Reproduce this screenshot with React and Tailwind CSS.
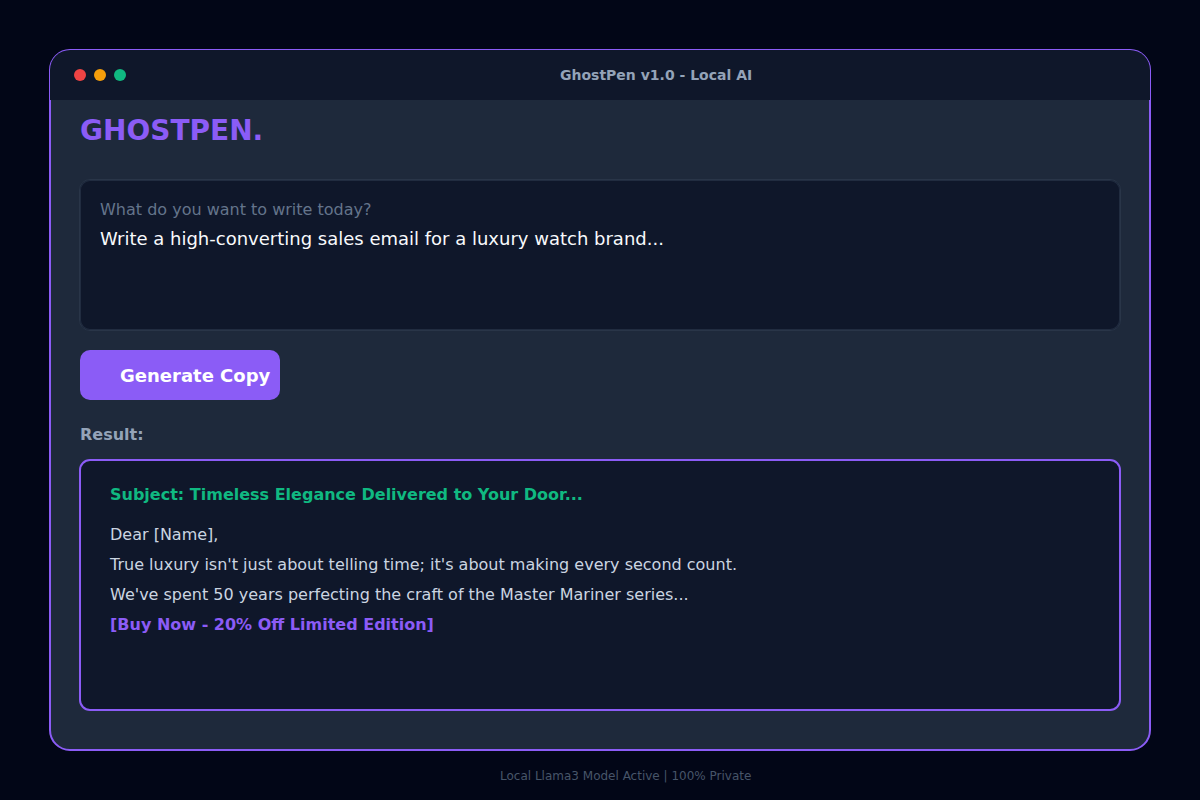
import { useState } from 'react';

const DOTS = ['bg-[#ef4444]', 'bg-[#f59e0b]', 'bg-[#10b981]'];

const RESULT = {
    subject: 'Subject: Timeless Elegance Delivered to Your Door...',
    body: [
        'Dear [Name],',
        "True luxury isn't just about telling time; it's about making every second count.",
        "We've spent 50 years perfecting the craft of the Master Mariner series...",
    ],
    cta: '[Buy Now - 20% Off Limited Edition]',
};

// Title bar sits over the inner half of the window border
const TitleBar = () => (
    <header className="-mx-px -mt-px h-[50px] grid grid-cols-[calc(50%-40px)_1fr] items-center rounded-t-[20px] bg-[#0f172a]">
        <div className="flex gap-2 pl-6">
            {DOTS.map((color) => (
                <span key={color} className={`size-3 rounded-full ${color}`} />
            ))}
        </div>
        <p className="text-sm font-bold text-[#94a3b8]">GhostPen v1.0 - Local AI</p>
    </header>
);

const PromptBox = ({ value, onChange }) => (
    <div className="flex flex-col h-[152px] px-5 pt-[18px] pb-4 rounded-[11px] border border-[#293548] inset-ring inset-ring-[#212c40] bg-[#0f172a]">
        <label htmlFor="prompt" className="mb-[3px] text-base leading-6 text-[#64748b]">
            What do you want to write today?
        </label>
        <textarea
            id="prompt"
            value={value}
            onChange={(e) => onChange(e.target.value)}
            className="flex-1 w-full resize-none outline-none bg-transparent text-lg leading-7 text-[#f8fafc]"
        />
    </div>
);

const ResultBox = ({ result }) => (
    <section
        aria-labelledby="result-title"
        className="min-h-[252px] px-[29px] py-[19px] rounded-[11px] border-2 border-[#8b5cf6] bg-[#0f172a] text-base leading-[30px] text-[#cbd5e1]"
    >
        <h3 className="mb-[10px] font-bold text-[#10b981]">{result.subject}</h3>
        {result.body.map((line) => (
            <p key={line}>{line}</p>
        ))}
        <a href="#buy" className="font-bold text-[#8b5cf6]">{result.cta}</a>
    </section>
);

const App = () => {
    const [prompt, setPrompt] = useState('Write a high-converting sales email for a luxury watch brand...');

    return (
        <div className="min-h-screen px-[49px] pt-[49px] pb-4 bg-[#020617] font-[Verdana,'DejaVu_Sans',sans-serif]">
            <main className="rounded-[21px] border-2 border-[#8b5cf6] bg-[#1e293b]">
                <TitleBar />
                <div className="px-7 pt-[11px] pb-[38px]">
                    <h1 className="mb-7 pl-px text-[28px] leading-10 font-bold text-[#8b5cf6]">GHOSTPEN.</h1>
                    <PromptBox value={prompt} onChange={setPrompt} />
                    <button
                        type="button"
                        className="block mt-[19px] ml-px w-[200px] h-[50px] pl-10 pt-[2px] rounded-[10px] bg-[#8b5cf6] text-left text-lg font-bold text-white whitespace-nowrap"
                    >
                        Generate Copy
                    </button>
                    <h2 id="result-title" className="mt-[23px] mb-3 pl-px text-base leading-6 font-bold text-[#94a3b8]">
                        Result:
                    </h2>
                    <ResultBox result={RESULT} />
                </div>
            </main>
            <footer className="mt-[17px] pl-[calc(50%-100px)] text-xs leading-4 text-[#475569]">
                Local Llama3 Model Active | 100% Private
            </footer>
        </div>
    );
};

export default App;
